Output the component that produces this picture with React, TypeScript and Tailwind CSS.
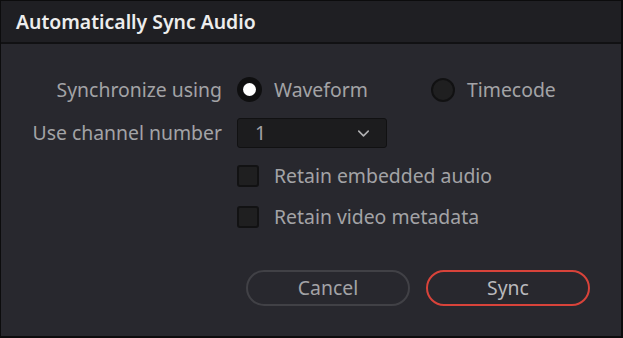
import { ChevronDown } from "lucide-react";

function Radio({ checked, label }: { checked: boolean; label: string }) {
    return (
        <div className="flex items-center gap-[12px]">
            <span
                className={
                    checked
                        ? "flex h-[25px] w-[25px] items-center justify-center rounded-full bg-[#0f0f10]"
                        : "h-[24px] w-[24px] rounded-full border-2 border-[#111112] bg-[#1f1f20]"
                }
            >
                {checked ? <span className="h-[13px] w-[13px] rounded-full bg-white" /> : null}
            </span>
            <span className="text-[#a3a3a6]">{label}</span>
        </div>
    );
}

function Checkbox({ label }: { label: string }) {
    return (
        <div className="flex items-center gap-[15px]">
            <span className="h-[22px] w-[22px] rounded-[3px] border-2 border-[#121213] bg-[#1f1f20]" />
            <span className="text-[#a3a3a6]">{label}</span>
        </div>
    );
}

export default function App() {
    return (
        <div
            className="flex h-[338px] w-[623px] flex-col border-t border-l border-r-2 border-b-2 border-[#0c0c0d] bg-[#28282e] text-[19.4px] leading-none"
            style={{ fontFamily: '"Noto Sans", "Open Sans", sans-serif' }}
        >
            <div className="flex h-[43px] shrink-0 items-center border-b-2 border-[#111113] bg-[#1f1f23] px-[15px] pt-[1px] font-semibold text-[#ededed]">
                Automatically Sync Audio
            </div>
            <div className="flex flex-1 flex-col pt-[33px]">
                <div className="flex items-center">
                    <div className="w-[221px] text-right text-[#a3a3a6]">Synchronize using</div>
                    <div className="ml-[15px] w-[194px]">
                        <Radio checked label="Waveform" />
                    </div>
                    <Radio checked={false} label="Timecode" />
                </div>
                <div className="mt-[16px] flex items-center">
                    <div className="w-[221px] text-right text-[#a3a3a6]">Use channel number</div>
                    <div className="ml-[15px] flex h-[30px] w-[150px] items-center justify-between rounded-[3px] border border-[#111112] bg-[#1c1c1e] pr-[13px] pl-[17px] text-[#a3a3a6]">
                        <span>1</span>
                        <ChevronDown className="h-[19px] w-[19px] text-[#b0b0b2]" strokeWidth={2} />
                    </div>
                </div>
                <div className="mt-[17px] ml-[236px] flex flex-col gap-[19px]">
                    <Checkbox label="Retain embedded audio" />
                    <Checkbox label="Retain video metadata" />
                </div>
                <div className="mt-[42px] ml-[245px] flex gap-[16px]">
                    <button className="h-[36px] w-[164px] rounded-full border-2 border-[#414146] text-[#a3a3a6]">
                        Cancel
                    </button>
                    <button className="h-[36px] w-[164px] rounded-full border-2 border-[#d8433a] text-[#b9b9bc]">
                        Sync
                    </button>
                </div>
            </div>
        </div>
    );
}
